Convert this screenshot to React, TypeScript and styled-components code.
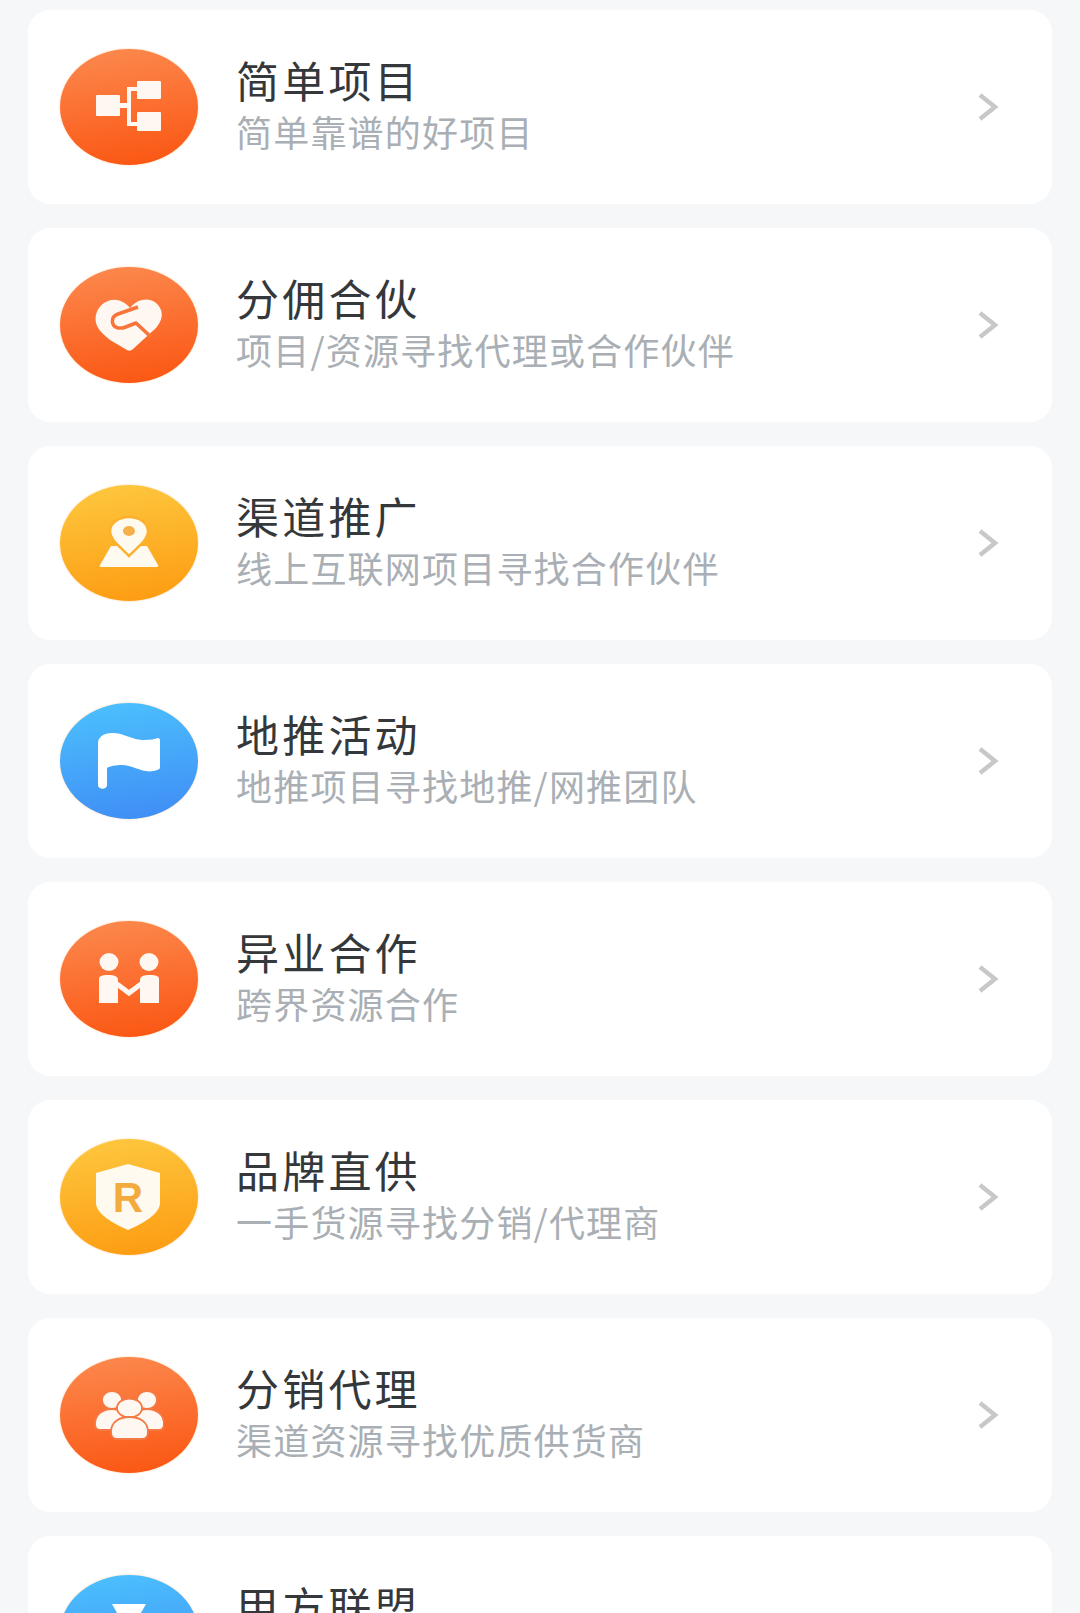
import React from "react";
import styled, { createGlobalStyle } from "styled-components";

const GlobalStyle = createGlobalStyle`
  html, body {
    margin: 0;
    padding: 0;
    height: 1613px;
    overflow: hidden;
    background: #f5f7f9;
  }
  * { box-sizing: border-box; }
`;

const gradients = {
  orange: "linear-gradient(172deg, #fc8a50 0%, #fb5410 100%)",
  yellow: "linear-gradient(172deg, #fdc940 0%, #fd9a10 100%)",
  blue: "linear-gradient(172deg, #4cc2fd 0%, #3f8bf5 100%)",
};

type Tone = keyof typeof gradients;

const List = styled.main`
  display: flex;
  flex-direction: column;
  gap: 24px;
  padding: 10px 28px 0;
  font-family: "Noto Sans CJK SC", "Noto Sans", sans-serif;
`;

const Card = styled.section`
  flex: none;
  display: flex;
  align-items: center;
  height: 194px;
  padding: 0 53px 0 32px;
  background: #ffffff;
  border-radius: 22px;
`;

const Badge = styled.div<{ $tone: Tone }>`
  flex: none;
  display: flex;
  align-items: center;
  justify-content: center;
  width: 138px;
  height: 116px;
  border-radius: 50%;
  background: ${(p) => gradients[p.$tone]};
  box-shadow: 0 0 2px rgba(255, 190, 120, 0.7);
`;

const Glyph = styled.svg`
  width: 70px;
  height: 70px;
  display: block;
`;

const TextBlock = styled.div`
  flex: 1;
  display: flex;
  flex-direction: column;
  gap: 7px;
  margin-left: 38px;
  padding-bottom: 6px;
`;

const Title = styled.h3`
  margin: 0;
  font-size: 43px;
  line-height: 46px;
  font-weight: 400;
  letter-spacing: 3.2px;
  color: #35383b;
`;

const Subtitle = styled.p`
  margin: 0;
  min-height: 44px;
  font-size: 36px;
  line-height: 44px;
  font-weight: 400;
  letter-spacing: 1.2px;
  color: #a9afb4;
`;

const Chevron = styled.svg`
  flex: none;
  width: 22px;
  height: 30px;
  display: block;
`;

const ShieldLetter = styled.text`
  font-family: "Liberation Sans", Arial, sans-serif;
  font-size: 42px;
  font-weight: 700;
  fill: #f2ab3c;
`;

const TreeIcon = () => (
  <Glyph viewBox="0 0 70 70" fill="#fff8f2">
    <rect x="2" y="23" width="24" height="21" rx="1" />
    <rect x="43" y="9" width="24" height="18" rx="1" />
    <rect x="43" y="40" width="24" height="19" rx="1" />
    <path d="M25 31h8V15h11v4h-7v31h7v4H33V36h-8z" />
  </Glyph>
);

const HandshakeIcon = () => (
  <Glyph viewBox="0 0 70 70">
    <path
      fill="#fff8f2"
      d="M36 18C30 11 22 8 14 11 5 14 0 24 2 33c2 7 8 12 14 17l17 10c2 1 4 1 6-1L62 38c5-6 7-12 5-18C64 12 56 8 48 10c-5 1-9 4-12 8z"
    />
    <path
      fill="none"
      stroke="#f8743a"
      strokeWidth="3.5"
      strokeLinejoin="round"
      d="M44 17 24 24c-8 3-7 12 0 14h5l13-5 15 14"
    />
  </Glyph>
);

const PinIcon = () => (
  <Glyph viewBox="0 0 70 70">
    <path fill="#fffaf0" d="M17 38 6 57c-1 1 0 2 2 2h54c2 0 3-1 2-2L53 38z" />
    <path
      fill="#fffaf0"
      stroke="#fdb02c"
      strokeWidth="2.5"
      d="M35 48C29 41 16 33 16 23 16 15 25 9 35 9s19 6 19 14c0 10-13 18-19 25z"
    />
    <ellipse cx="35" cy="23" rx="6" ry="5" fill="#f5b04a" />
  </Glyph>
);

const FlagIcon = () => (
  <Glyph viewBox="0 0 70 70">
    <path
      fill="#ffffff"
      d="M4 17C4 11 10 7 18 7c12 0 20 7 32 7 6 0 11-1 14-2 1 0 2 1 2 2v27c0 2-1 2-3 3-13 5-23-5-35-5-6 0-12 1-15 3v17c0 5-9 5-9 0z"
    />
  </Glyph>
);

const PartnersIcon = () => (
  <Glyph viewBox="0 0 70 70" fill="#fff8f2">
    <ellipse cx="15" cy="18" rx="9.5" ry="9" />
    <ellipse cx="55" cy="18" rx="9.5" ry="9" />
    <path d="M5 35c0-3 3-4 9-4s10 1 10 5v23H5z" />
    <path d="M65 35c0-3-3-4-9-4s-10 1-10 5v23h19z" />
    <path d="M23 40l12 9 12-9" fill="none" stroke="#fff8f2" strokeWidth="5" />
  </Glyph>
);

const ShieldIcon = () => (
  <Glyph viewBox="0 0 70 70">
    <path fill="#fffaf0" d="M34 2l32 9v30c0 11-18 21-32 27C20 62 2 52 2 41V11z" />
    <ShieldLetter x="34" y="50" textAnchor="middle">
      R
    </ShieldLetter>
  </Glyph>
);

const PeopleIcon = () => (
  <Glyph viewBox="0 0 70 70">
    <g fill="#fff8f2" stroke="#f47a45" strokeWidth="1.8">
      <ellipse cx="18" cy="20" rx="10" ry="9" />
      <ellipse cx="53" cy="20" rx="10" ry="9" />
      <path d="M1 44c0-9 7-15 17-15 8 0 12 4 12 11v10H6c-4 0-5-2-5-6z" />
      <path d="M70 44c0-9-7-15-17-15-8 0-12 4-12 11v10h24c4 0 5-2 5-6z" />
      <ellipse cx="35.5" cy="28" rx="12.5" ry="9.5" />
      <path d="M17 52c0-10 8-15 18.5-15S54 42 54 52c0 5-2 7-6 7H23c-4 0-6-2-6-7z" />
    </g>
  </Glyph>
);

const FunnelIcon = () => (
  <Glyph viewBox="0 0 70 70">
    <path fill="#ffffff" d="M18 6h34L35 36z" />
  </Glyph>
);

const items: { tone: Tone; icon: React.ReactNode; title: string; sub?: string }[] = [
  { tone: "orange", icon: <TreeIcon />, title: "简单项目", sub: "简单靠谱的好项目" },
  { tone: "orange", icon: <HandshakeIcon />, title: "分佣合伙", sub: "项目/资源寻找代理或合作伙伴" },
  { tone: "yellow", icon: <PinIcon />, title: "渠道推广", sub: "线上互联网项目寻找合作伙伴" },
  { tone: "blue", icon: <FlagIcon />, title: "地推活动", sub: "地推项目寻找地推/网推团队" },
  { tone: "orange", icon: <PartnersIcon />, title: "异业合作", sub: "跨界资源合作" },
  { tone: "yellow", icon: <ShieldIcon />, title: "品牌直供", sub: "一手货源寻找分销/代理商" },
  { tone: "orange", icon: <PeopleIcon />, title: "分销代理", sub: "渠道资源寻找优质供货商" },
  { tone: "blue", icon: <FunnelIcon />, title: "甲方联盟" },
];

export default function App() {
  return (
    <>
      <GlobalStyle />
      <List>
        {items.map((item) => (
          <Card key={item.title}>
            <Badge $tone={item.tone}>{item.icon}</Badge>
            <TextBlock>
              <Title>{item.title}</Title>
              <Subtitle>{item.sub}</Subtitle>
            </TextBlock>
            <Chevron viewBox="0 0 22 30" fill="none">
              <path d="M3 3l15 12L3 27" stroke="#c6c8ca" strokeWidth="4.5" />
            </Chevron>
          </Card>
        ))}
      </List>
    </>
  );
}
